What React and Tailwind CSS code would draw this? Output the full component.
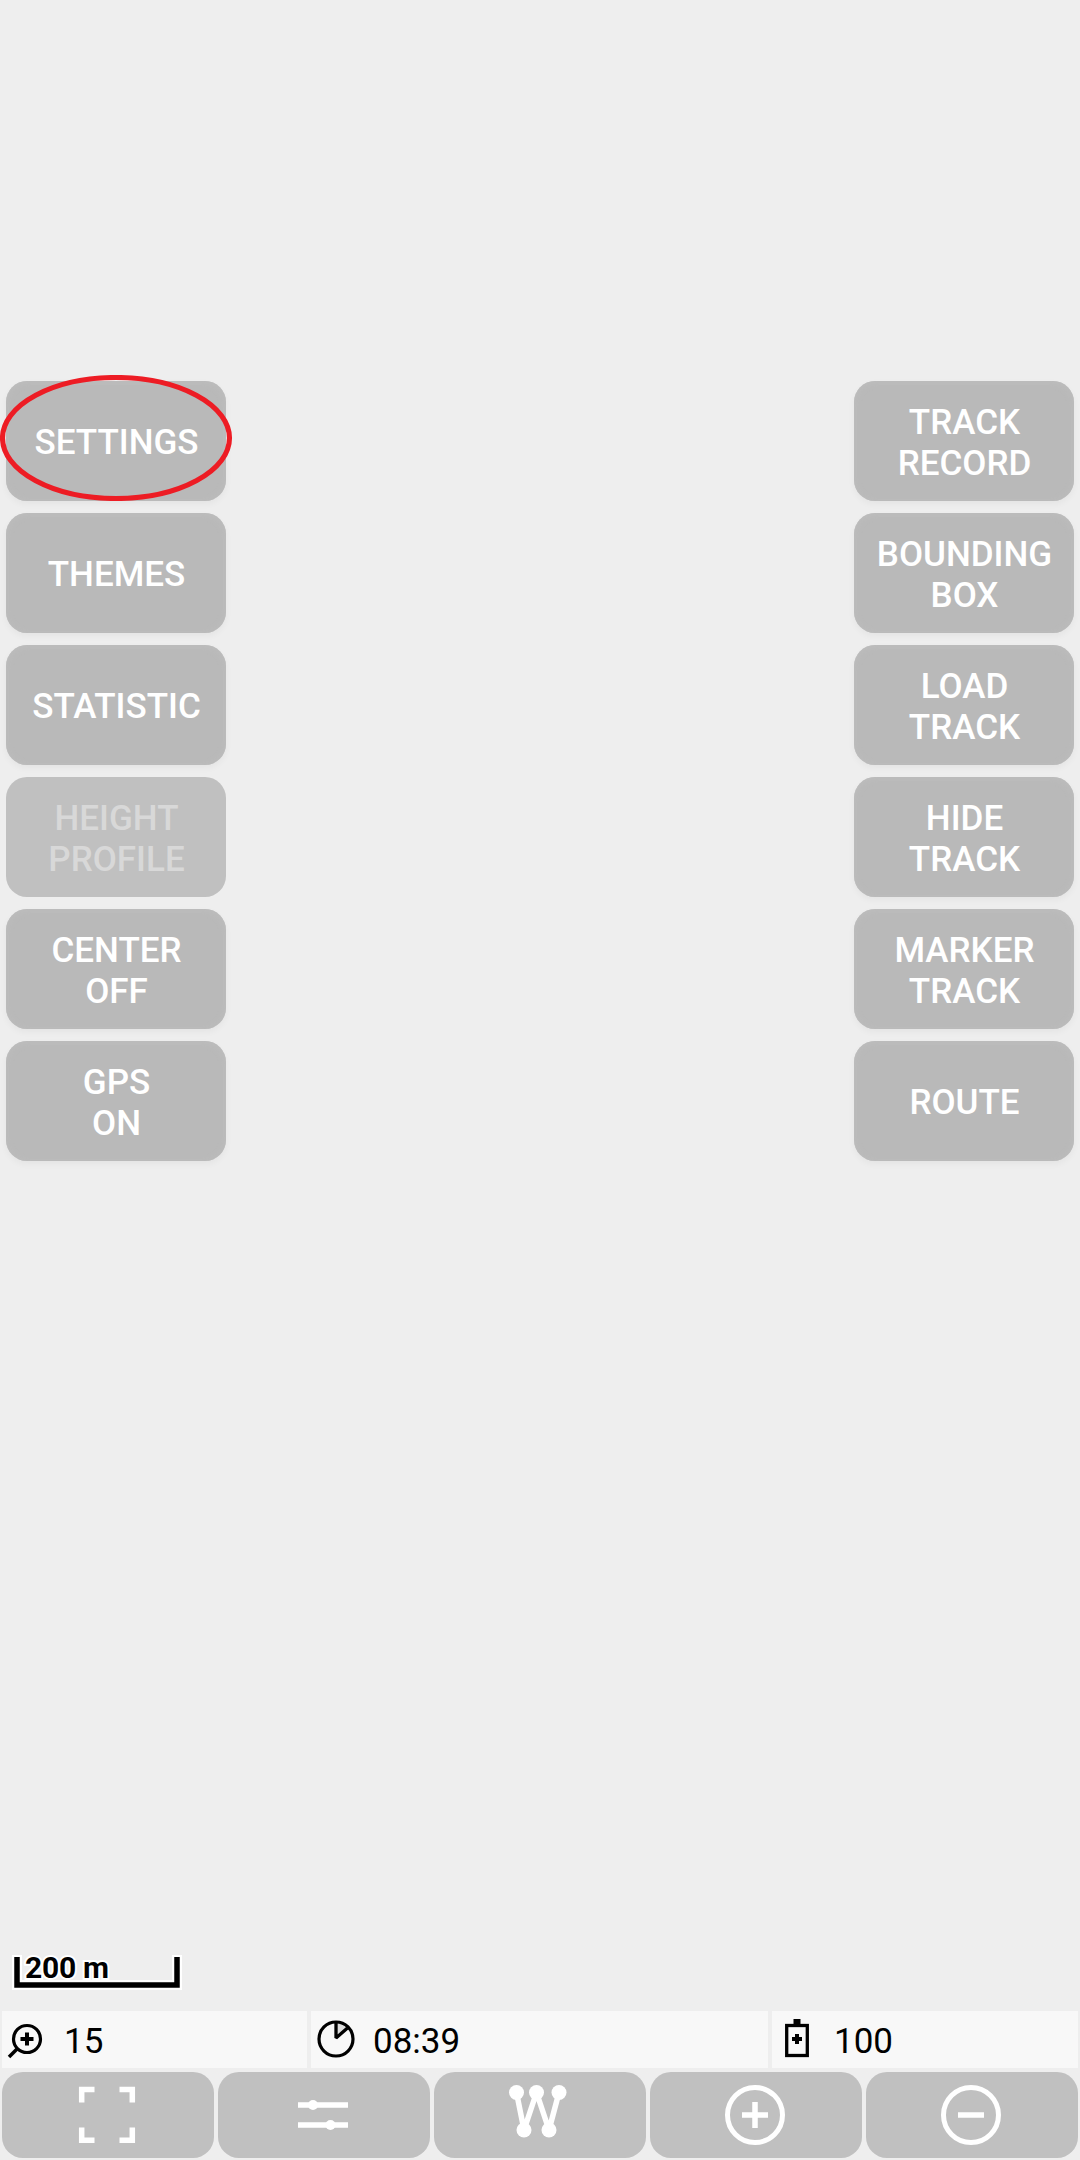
const leftActions = [
  { lines: ["SETTINGS"], highlighted: true },
  { lines: ["THEMES"] },
  { lines: ["STATISTIC"] },
  { lines: ["HEIGHT", "PROFILE"], disabled: true },
  { lines: ["CENTER", "OFF"] },
  { lines: ["GPS", "ON"] },
];

const rightActions = [
  { lines: ["TRACK", "RECORD"] },
  { lines: ["BOUNDING", "BOX"] },
  { lines: ["LOAD", "TRACK"] },
  { lines: ["HIDE", "TRACK"] },
  { lines: ["MARKER", "TRACK"] },
  { lines: ["ROUTE"] },
];

function ActionButton({ lines, disabled, highlighted }) {
  return (
    <div className="relative">
      <button
        disabled={disabled}
        className={
          "flex h-[120px] w-[220px] flex-col items-center justify-center rounded-[21px] pl-px pt-[3px] text-[35px] font-medium leading-[41px] " +
          (disabled
            ? "bg-[#c0c0c0] text-[#d8d8d8]"
            : "bg-[#b9b9b9] text-white shadow-[0_3px_7px_rgba(0,0,0,0.045),inset_0_1px_6px_1px_#bdbdbd]")
        }
      >
        {lines.map((line) => (
          <span key={line}>{line}</span>
        ))}
      </button>
      {highlighted && (
        <svg className="absolute -left-1.5 -top-1.5" width="234" height="126" viewBox="0 0 234 126" fill="none">
          <ellipse cx="116" cy="63" rx="113.5" ry="60.5" stroke="#ed1c24" strokeWidth="5.1" />
        </svg>
      )}
    </div>
  );
}

function ActionColumn({ actions }) {
  return (
    <div className="flex flex-col gap-3">
      {actions.map((action) => (
        <ActionButton key={action.lines.join(" ")} {...action} />
      ))}
    </div>
  );
}

function ScaleBar() {
  return (
    <div className="ml-3 h-[35px] w-[170px]">
      <svg className="overflow-visible" width="170" height="35" viewBox="0 0 170 35" fill="none">
        <path d="M5 0V30H165V0" stroke="#fff" strokeWidth="10" />
        <path d="M5 2V30H165V2" stroke="#000" strokeWidth="5.5" />
        <text
          x="13"
          y="23"
          fill="#000"
          stroke="#fff"
          strokeWidth="4"
          paintOrder="stroke"
          fontFamily="Roboto, sans-serif"
          fontSize="30"
          fontWeight="700"
          textLength="84"
        >
          200 m
        </text>
      </svg>
    </div>
  );
}

function ZoomLevelIcon() {
  return (
    <svg width="44" height="45" viewBox="5 2017 44 45" fill="none" stroke="#000">
      <circle cx="27" cy="2039" r="13.5" strokeWidth="3.2" />
      <path d="M20.5 2039h13M27 2032.5v13" strokeWidth="4" />
      <path d="M17.5 2048.5L9 2057" strokeWidth="3.6" />
    </svg>
  );
}

function ClockIcon() {
  return (
    <svg width="44" height="45" viewBox="314 2017 44 45" fill="none" stroke="#000">
      <path d="M336 2022V2038.5L347.5 2028Z" fill="#ddd" stroke="none" />
      <circle cx="336" cy="2039" r="17" strokeWidth="3.2" />
      <path d="M336 2022V2038L347.5 2028" strokeWidth="3.3" strokeLinejoin="bevel" />
    </svg>
  );
}

function BatteryIcon() {
  return (
    <svg width="44" height="45" viewBox="775 2017 44 45" fill="none" stroke="#000">
      <path d="M793.5 2019h7v6h-7z" fill="#000" stroke="none" />
      <rect x="786.7" y="2025.5" width="20.6" height="30" strokeWidth="3.3" />
      <path d="M792 2039h10M797 2034v10" strokeWidth="4" />
    </svg>
  );
}

function StatusCell({ icon, children, className }) {
  return (
    <div className={"flex h-[57px] items-center bg-[#f8f8f8] pl-[3px] text-[35px] leading-none text-black " + className}>
      {icon}
      <span className="pt-[3px]">{children}</span>
    </div>
  );
}

function ToolButton({ label, children }) {
  return (
    <button
      aria-label={label}
      className="flex h-[86px] w-[212px] items-center justify-center rounded-[21px] bg-[#c0c0c0]"
    >
      <svg width="66" height="66" viewBox="-33 -33 66 66" fill="none" stroke="#fff" strokeWidth="5.5">
        {children}
      </svg>
    </button>
  );
}

export default function App() {
  return (
    <div className="flex h-[2160px] w-[1080px] flex-col overflow-hidden bg-[#eeeeee] font-['Roboto',sans-serif]">
      <main className="flex flex-1 justify-between px-1.5 pt-[381px]">
        <ActionColumn actions={leftActions} />
        <ActionColumn actions={rightActions} />
      </main>

      <ScaleBar />

      <div className="mt-[21px] flex gap-1 px-0.5">
        <StatusCell className="w-[305px] gap-[15px]" icon={<ZoomLevelIcon />}>
          15
        </StatusCell>
        <StatusCell className="w-[457px] gap-[15px]" icon={<ClockIcon />}>
          08:39
        </StatusCell>
        <StatusCell className="w-[306px] gap-[15px]" icon={<BatteryIcon />}>
          100
        </StatusCell>
      </div>

      <nav className="mb-0.5 mt-1 flex gap-1 px-0.5">
        <ToolButton label="Full screen">
          <path d="M-26.3-12.5V-25.5H-13.5M11.5-25.5H24.3V-12.5M24.3 12.5V25.3H11.5M-13.5 25.3H-26.3V12.5" />
        </ToolButton>
        <ToolButton label="Options">
          <path d="M-26-10H24M-26 10H24" />
          <g fill="#fff" stroke="none">
            <circle cx="-11" cy="-10" r="5" />
            <circle cx="6.5" cy="10" r="5" />
          </g>
        </ToolButton>
        <ToolButton label="Waypoints">
          <path d="M-23.5-22.5L-16 15L-3.5-22.5L9 15L19-22.5" strokeLinejoin="round" />
          <g fill="#fff" stroke="none">
            <circle cx="-23.5" cy="-22.5" r="7.5" />
            <circle cx="-3.5" cy="-22.5" r="7.5" />
            <circle cx="19" cy="-22.5" r="7.5" />
            <circle cx="-16" cy="15" r="7.5" />
            <circle cx="9" cy="15" r="7.5" />
          </g>
        </ToolButton>
        <ToolButton label="Zoom in">
          <circle cx="-1" cy="0" r="27.5" strokeWidth="5" />
          <path d="M-14 0H12M-1-13V13" />
        </ToolButton>
        <ToolButton label="Zoom out">
          <circle cx="-1" cy="0" r="27.5" strokeWidth="5" />
          <path d="M-14 0H12" />
        </ToolButton>
      </nav>
    </div>
  );
}
